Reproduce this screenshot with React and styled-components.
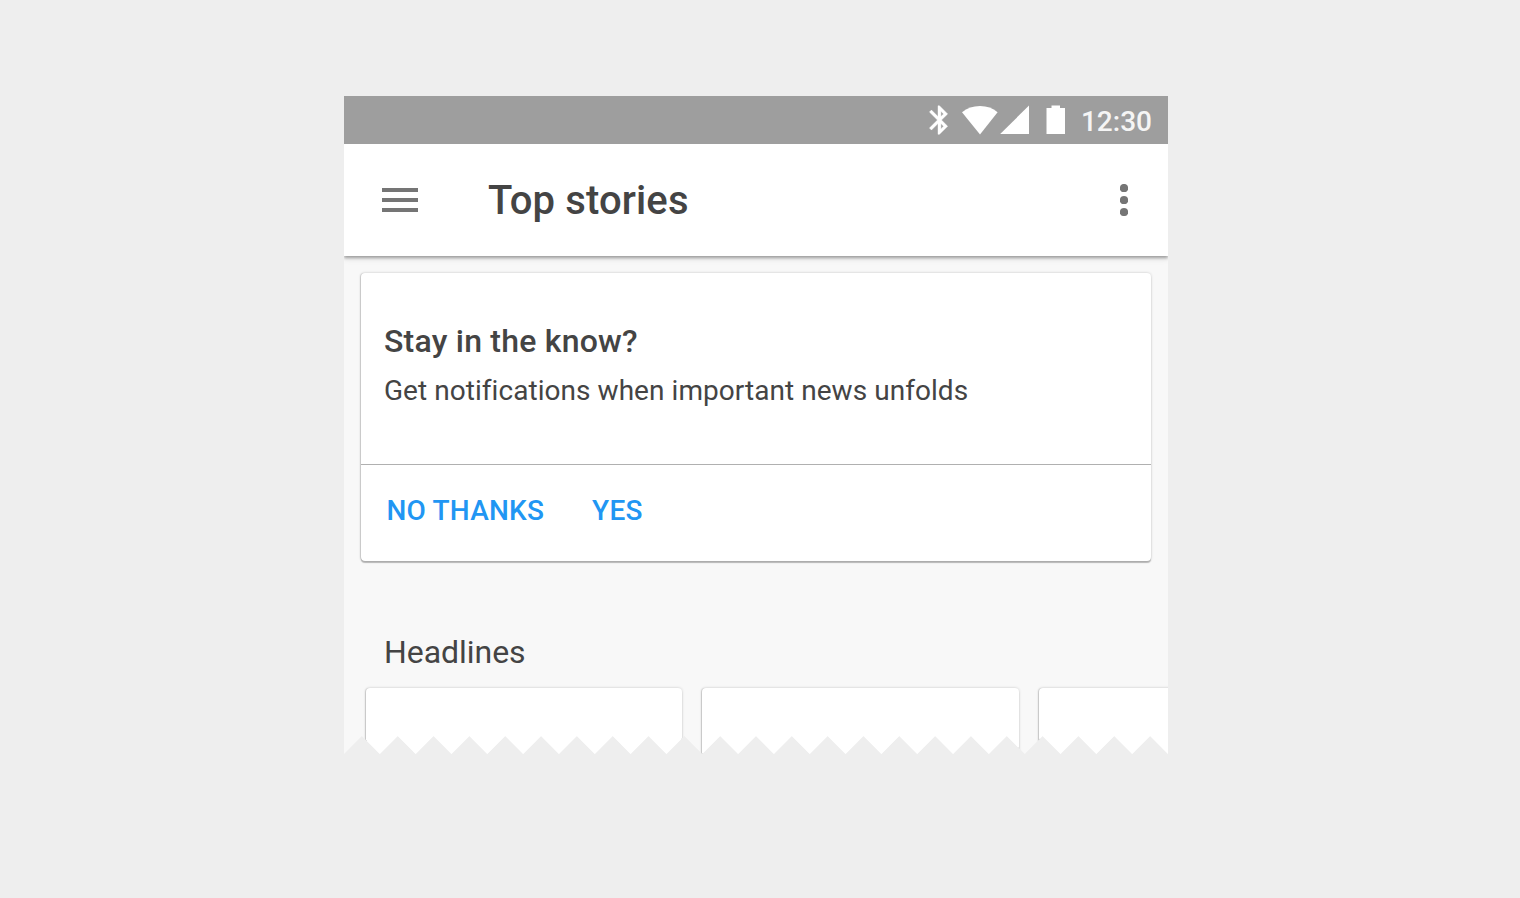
import React from "react";
import styled, { createGlobalStyle } from "styled-components";

const GlobalStyle = createGlobalStyle`
  *, *::before, *::after { box-sizing: border-box; }
  body {
    margin: 0;
    background: #eeeeee;
    color: #444444;
    font-family: Roboto, "Liberation Sans", sans-serif;
    -webkit-font-smoothing: antialiased;
  }
`;

const TEETH = 23;
const WIDTH = 824;
const HEIGHT = 658;
const TOOTH_DEPTH = 18;

const tornEdge = () => {
  const step = WIDTH / TEETH;
  const points = [`0px 0px`, `${WIDTH}px 0px`];
  for (let i = TEETH; i > 0; i--) {
    points.push(`${(i * step).toFixed(2)}px ${HEIGHT}px`);
    points.push(`${((i - 0.5) * step).toFixed(2)}px ${HEIGHT - TOOTH_DEPTH}px`);
  }
  points.push(`0px ${HEIGHT}px`);
  return `polygon(${points.join(", ")})`;
};

const Page = styled.main`
  min-height: 898px;
  padding: 96px 0 0 344px;
  overflow: hidden;
`;

const Screen = styled.section`
  display: flex;
  flex-direction: column;
  width: ${WIDTH}px;
  height: ${HEIGHT}px;
  overflow: hidden;
  background: #f8f8f8;
  clip-path: ${tornEdge()};
`;

const StatusBar = styled.div`
  position: relative;
  z-index: 1;
  display: flex;
  flex: none;
  align-items: center;
  justify-content: flex-end;
  height: 48px;
  padding-right: 16px;
  background: #9e9e9e;
`;

const StatusIcons = styled.svg`
  display: block;
  width: 140px;
  height: 48px;
  margin-right: 13px;
  fill: #ffffff;
`;

const Clock = styled.time`
  padding-top: 4px;
  color: #f5f5f5;
  font-size: 28px;
  font-weight: 500;
  line-height: 32px;
`;

const AppBar = styled.header`
  display: flex;
  flex: none;
  align-items: center;
  height: 112px;
  padding: 0 40px 0 38px;
  background: #ffffff;
  box-shadow: 0 2px 3px rgba(0, 0, 0, 0.34), 0 4px 6px rgba(0, 0, 0, 0.06);
`;

const IconButton = styled.button`
  display: flex;
  padding: 0;
  border: 0;
  background: none;
  color: #757575;
  cursor: pointer;

  svg {
    display: block;
    fill: currentColor;
  }
`;

const Title = styled.h1`
  flex: 1;
  margin: 0;
  padding: 2px 0 0 70px;
  font-size: 40px;
  font-weight: 500;
  line-height: 48px;
  letter-spacing: 0.12px;
  white-space: nowrap;
`;

const Card = styled.article`
  border-radius: 4px;
  background: #ffffff;
  box-shadow: 0 0 3px rgba(0, 0, 0, 0.18), -1px 0 1px rgba(0, 0, 0, 0.12), 0 2px 1px rgba(0, 0, 0, 0.24);
`;

const PromptCard = styled(Card)`
  flex: none;
  height: 288px;
  margin: 17px 17px 0;
`;

const PromptBody = styled.div`
  height: 192px;
  padding: 48px 23px 0;
  border-bottom: 1px solid #b0b0b0;
`;

const PromptTitle = styled.h2`
  margin: 0;
  font-size: 32px;
  font-weight: 500;
  line-height: 40px;
  letter-spacing: 0.22px;
`;

const PromptText = styled.p`
  margin: 12px 0 0;
  font-size: 28px;
  line-height: 36px;
  letter-spacing: 0.05px;
`;

const Actions = styled.div`
  display: flex;
  gap: 48px;
  padding: 28px 25.4px 0;
`;

const ActionButton = styled.button`
  padding: 0;
  border: 0;
  background: none;
  color: #2196f3;
  font: 500 28px/36px Roboto, "Liberation Sans", sans-serif;
  letter-spacing: 0.22px;
  cursor: pointer;
`;

const SectionTitle = styled.h2`
  flex: none;
  margin: 71px 0 0 40px;
  font-size: 32px;
  font-weight: 400;
  line-height: 40px;
  letter-spacing: -0.05px;
`;

const Headlines = styled.div`
  display: flex;
  flex: none;
  gap: 20px;
  margin: 16px 0 0 22px;
`;

const HeadlineCard = styled(Card)`
  flex: none;
  width: 316.4px;
  height: 100px;
`;

export default function App() {
  return (
    <>
      <GlobalStyle />
      <Page>
        <Screen>
          <StatusBar>
            <StatusIcons viewBox="0 0 140 48" aria-hidden="true">
              <path
                transform="translate(-5.7 6.9) scale(1.43)"
                stroke="#ffffff"
                strokeWidth="0.3"
                d="M17.71 7.71L12 2h-1v7.59L6.41 5 5 6.41 10.59 12 5 17.59 6.41 19 11 14.41V22h1l5.71-5.71-4.3-4.29 4.3-4.29zM13 5.83l1.88 1.88L13 9.59V5.83zm1.88 10.46L13 18.17v-3.76l1.88 1.88z"
              />
              <path d="M34 16.3Q41.5 9.9 52 9.9T69.6 16.3L52 38.4z" />
              <path d="M72.2 38L101 9.5V38z" />
              <path d="M118.5 12H123.5V9.5H132V12H137V38H118.5z" />
            </StatusIcons>
            <Clock>12:30</Clock>
          </StatusBar>
          <AppBar>
            <IconButton aria-label="Menu">
              <svg width="36" height="24" viewBox="0 0 36 24">
                <path d="M0 0h36v4H0zM0 10h36v4H0zM0 20h36v4H0z" />
              </svg>
            </IconButton>
            <Title>Top stories</Title>
            <IconButton aria-label="More">
              <svg width="8" height="32" viewBox="0 0 8 32">
                <circle cx="4" cy="4" r="4.1" />
                <circle cx="4" cy="16" r="4.1" />
                <circle cx="4" cy="28" r="4.1" />
              </svg>
            </IconButton>
          </AppBar>
          <PromptCard>
            <PromptBody>
              <PromptTitle>Stay in the know?</PromptTitle>
              <PromptText>Get notifications when important news unfolds</PromptText>
            </PromptBody>
            <Actions>
              <ActionButton>NO THANKS</ActionButton>
              <ActionButton>YES</ActionButton>
            </Actions>
          </PromptCard>
          <SectionTitle>Headlines</SectionTitle>
          <Headlines>
            <HeadlineCard />
            <HeadlineCard />
            <HeadlineCard />
          </Headlines>
        </Screen>
      </Page>
    </>
  );
}
